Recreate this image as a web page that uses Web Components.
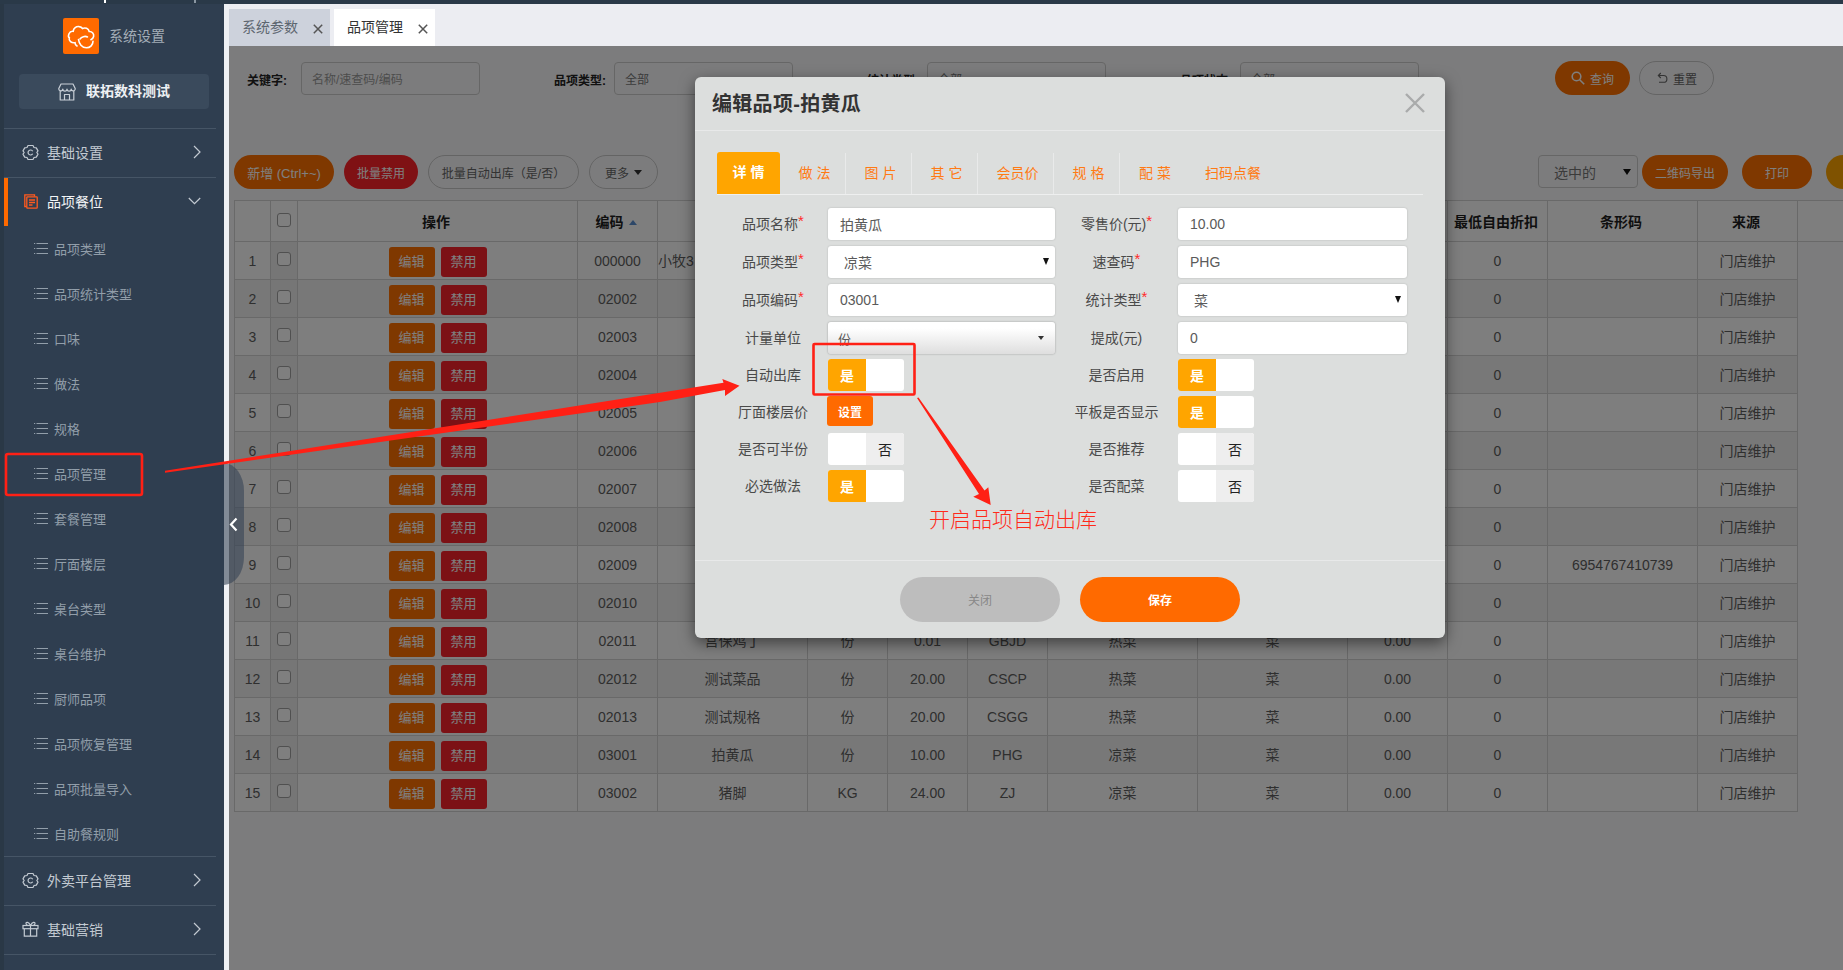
<!DOCTYPE html>
<html lang="zh">
<head>
<meta charset="utf-8">
<title>品项管理</title>
<style>
  html, body { margin: 0; height: 970px; overflow: hidden; background: #eef0f4; }
  body { font-family: "Liberation Sans", "Noto Sans CJK SC", sans-serif; font-size: 14px; position: relative; }
</style>
</head>
<body>
<app-shell></app-shell>
<mark-up></mark-up>

<script>
/* ─────────────────────────────────────────────
   icons
───────────────────────────────────────────── */
const ICONS = {
  gear: `<svg width="17" height="17" viewBox="0 0 17 17" fill="none" stroke="currentColor" stroke-width="1.2" stroke-linejoin="round"><path d="M6 1.5h5l1 2 2.300.4 1.700 3-1.200 1.600 1.200 1.600-1.700 3-2.300.4-1 2H6l-1-2-2.300-.4-1.700-3 1.200-1.600L1 6.900l1.700-3L5 3.500z"/><path d="M10.700 7.200a2.500 2.500 0 1 0 0 2.600"/></svg>`,
  docs: `<svg width="14" height="15" viewBox="0 0 14 15" fill="none" stroke="#ff5a1f" stroke-width="1.300"><path d="M2.500 12.500H.8V.8h9.700v1.700"/><rect x="2.800" y="2.800" width="10.400" height="11.400" rx=".6"/><path d="M5 6h6M5 8.500h6M5 11h3.500"/></svg>`,
  gift: `<svg width="17" height="16" viewBox="0 0 17 16" fill="none" stroke="currentColor" stroke-width="1.200"><rect x="1" y="4.500" width="15" height="3.200"/><path d="M2.300 7.700v7.500h12.400V7.700M8.500 4.500v10.700M8.500 4.500C6 4.500 4 3.800 4 2.400S6.500.3 8.500 4.500zM8.500 4.500c2.500 0 4.500-.7 4.500-2.100S10.500.3 8.500 4.500z"/></svg>`,
  right: `<svg width="8" height="14" viewBox="0 0 8 14" fill="none" stroke="currentColor" stroke-width="1.200"><path d="M1 1l6 6-6 6"/></svg>`,
  down: `<svg width="13" height="8" viewBox="0 0 13 8" fill="none" stroke="currentColor" stroke-width="1.200"><path d="M.8 1l5.700 5.700L12.200 1"/></svg>`,
  list: `<svg width="14" height="13" viewBox="0 0 14 13" fill="none" stroke="currentColor" stroke-width="1"><path d="M2.500 1.500H14M2.500 6.500H14M2.500 11.500H14"/><path d="M0 1.500h1.200M0 6.500h1.200M0 11.500h1.200"/></svg>`,
  store: `<svg width="18" height="18" viewBox="0 0 18 18" fill="none" stroke="#c9d0d8" stroke-width="1.200" stroke-linejoin="round"><path d="M3 1h12l2.200 4.500a2 2 0 0 1-4 .6 2.100 2.100 0 0 1-4.200 0 2.100 2.100 0 0 1-4.200 0 2 2 0 0 1-4-.6z"/><path d="M2.200 8v9h13.600V8M6.500 17v-5.500h5V17"/></svg>`,
  logo: `<svg width="36" height="36" viewBox="0 0 36 36" fill="none" stroke="#fff" stroke-width="1.600" stroke-linecap="round"><path d="M14 28c-1.500-1-2-2.300-2-3.300-3.500.6-6.500-2-5.700-5-.3-.2-1.300-1.600-.3-4 .8-1.800 2.800-2.600 4.200-2.400.3-3 3-5.200 6-4.700 1.500.2 2.700 1 3.300 1.900 2.700-1.300 6-.1 6.700 3 3-.2 5 2.300 4.400 5-.3 1.500-1.400 2.600-2.700 3.200"/><path d="M15.500 21.500c.5 4 3.300 8.300 8 8.300 3.800 0 6.500-3 6.500-6.500"/><path d="M17 21c1.500-2.300 5-3.300 7.500-2"/></svg>`,
  search: `<svg width="14" height="14" viewBox="0 0 14 14" fill="none" stroke="#fff" stroke-width="1.600"><circle cx="5.500" cy="5.500" r="4.300"/><path d="M8.700 8.700l4.500 4.500"/></svg>`,
  reset: `<svg width="12" height="12" viewBox="0 0 12 12" fill="none" stroke="#666" stroke-width="1.100"><path d="M3 3.500h4.500a3.300 3.300 0 0 1 0 6.800H3"/><path d="M4.800 1L2.300 3.500 4.800 6"/></svg>`,
};

/* ─────────────────────────────────────────────
   <app-shell>
───────────────────────────────────────────── */
class AppShell extends HTMLElement {
  connectedCallback() {
    this.attachShadow({ mode: "open" });
    this.shadowRoot.innerHTML = `
      <style>
        :host { display: block; height: 970px; }
        .topbar {
          height: 4px;
          background:
            linear-gradient(#fff, #fff) 104px 0 / 2px 3px no-repeat,
            linear-gradient(#8a96a2, #8a96a2) 194px 0 / 2px 3px no-repeat,
            #2a3948;
        }
        .body { display: flex; height: 966px; }
        main-area { flex: 1; min-width: 0; }
      </style>
      <div class="topbar"></div>
      <div class="body">
        <side-bar></side-bar>
        <main-area></main-area>
      </div>
      <collapse-tab></collapse-tab>
    `;
  }
}
customElements.define("app-shell", AppShell);

/* ─────────────────────────────────────────────
   <side-bar>
───────────────────────────────────────────── */
class SideBar extends HTMLElement {
  connectedCallback() {
    this.attachShadow({ mode: "open" });
    const subs = ["品项类型", "品项统计类型", "口味", "做法", "规格", "品项管理", "套餐管理", "厅面楼层",
      "桌台类型", "桌台维护", "厨师品项", "品项恢复管理", "品项批量导入", "自助餐规则"];
    this.shadowRoot.innerHTML = `
      <style>
        :host {
          display: block; width: 224px; flex: none; box-sizing: border-box;
          background: #2f3e50; border-left: 4px solid #2a3846;
        }
        .brand {
          display: flex; align-items: center; gap: 10px;
          padding: 14px 0 0 59px; color: #a3adb7;
        }
        .brand span:last-child, .store span { padding-bottom: 3px; }
        .logo {
          width: 36px; height: 36px; background: #ff6a00; border-radius: 2px;
          display: flex;
        }
        .store {
          margin: 20px 0 19px 15px; width: 190px; height: 35px;
          background: #3a4a5c; border-radius: 4px;
          display: flex; align-items: center; gap: 10px; padding-left: 39px; box-sizing: border-box;
          color: #eef1f4; font-weight: 700;
        }
        .store svg { flex: none; }
      </style>
      <div class="brand"><span class="logo">${ICONS.logo}</span><span>系统设置</span></div>
      <div class="store">${ICONS.store}<span>联拓数科测试</span></div>
      <nav-group icon="gear" label="基础设置"></nav-group>
      <nav-group icon="docs" label="品项餐位" open></nav-group>
      ${subs.map((s) => `<nav-sub>${s}</nav-sub>`).join("")}
      <nav-group icon="gear" label="外卖平台管理"></nav-group>
      <nav-group icon="gift" label="基础营销" last></nav-group>
    `;
  }
}
customElements.define("side-bar", SideBar);

class NavGroup extends HTMLElement {
  connectedCallback() {
    this.attachShadow({ mode: "open" });
    const open = this.hasAttribute("open");
    this.shadowRoot.innerHTML = `
      <style>
        :host {
          display: flex; align-items: center; height: 49px; box-sizing: border-box;
          margin-right: 8px; padding: 0 15px 2px 18px;
          border-top: 1px solid #465566; color: ${open ? "#f2f4f6" : "#c3cad2"};
          ${open ? "box-shadow: inset 4px 0 0 #ff6a00;" : ""}
          ${this.hasAttribute("last") ? "height: 50px; border-bottom: 1px solid #465566;" : ""}
        }
        .icon { width: 17px; height: 17px; display: flex; align-items: center; justify-content: center; margin-right: 8px; }
        .label { flex: 1; }
        .arrow { display: flex; color: #c3cad2; }
      </style>
      <span class="icon">${ICONS[this.getAttribute("icon")]}</span>
      <span class="label">${this.getAttribute("label")}</span>
      <span class="arrow">${open ? ICONS.down : ICONS.right}</span>
    `;
  }
}
customElements.define("nav-group", NavGroup);

class NavSub extends HTMLElement {
  connectedCallback() {
    this.attachShadow({ mode: "open" });
    this.shadowRoot.innerHTML = `
      <style>
        :host {
          display: flex; align-items: center; gap: 6px; height: 45px;
          padding-left: 30px; font-size: 13px; color: #929eaa;
        }
        svg { flex: none; }
      </style>
      ${ICONS.list}<slot></slot>
    `;
  }
}
customElements.define("nav-sub", NavSub);

class CollapseTab extends HTMLElement {
  connectedCallback() {
    this.attachShadow({ mode: "open" });
    this.shadowRoot.innerHTML = `
      <style>
        :host {
          position: absolute; left: 224px; top: 463px; width: 20px; height: 122px; z-index: 5;
          background: rgba(52, 66, 84, .58);
          border-radius: 0 20px 20px 0 / 0 28px 28px 0;
          display: flex; align-items: center;
        }
        svg { margin-left: 5px; }
      </style>
      <svg width="9" height="15" viewBox="0 0 9 15" fill="none" stroke="#fff" stroke-width="2.200"><path d="M7.500 1.500L2 7.500l5.500 6"/></svg>
    `;
  }
}
customElements.define("collapse-tab", CollapseTab);

/* ─────────────────────────────────────────────
   <main-area>
───────────────────────────────────────────── */
class MainArea extends HTMLElement {
  connectedCallback() {
    this.attachShadow({ mode: "open" });
    this.shadowRoot.innerHTML = `
      <style>
        :host { display: flex; flex-direction: column; height: 966px; padding-left: 5px; background: #eef0f4; }
        .tabs { display: flex; gap: 4px; height: 42px; padding-top: 5px; box-sizing: border-box; background: #ecedf2; }
        .panel { flex: 1; position: relative; overflow: hidden; background: #f9f9fb; }
        .dim { position: absolute; inset: 0; background: rgba(0, 0, 0, .5); }
        edit-dialog { position: absolute; left: 466px; top: 31px; }
      </style>
      <div class="tabs">
        <page-tab>系统参数</page-tab>
        <page-tab active>品项管理</page-tab>
      </div>
      <div class="panel">
        <filter-bar></filter-bar>
        <action-bar></action-bar>
        <item-table></item-table>
        <div class="dim"></div>
        <edit-dialog></edit-dialog>
      </div>
    `;
  }
}
customElements.define("main-area", MainArea);

class PageTab extends HTMLElement {
  connectedCallback() {
    this.attachShadow({ mode: "open" });
    const active = this.hasAttribute("active");
    this.shadowRoot.innerHTML = `
      <style>
        :host {
          display: flex; align-items: center; width: 101px; height: 37px; box-sizing: border-box;
          padding: 0 7px 3px 13px; justify-content: space-between;
          background: ${active ? "#fff" : "#cdd2dc"}; color: ${active ? "#333" : "#5d6670"};
        }
        svg { margin-top: 5px; }
      </style>
      <slot></slot>
      <svg width="10" height="10" viewBox="0 0 10 10" stroke="#555" stroke-width="1.500"><path d="M.8.800l8.400 8.400M9.200.800L.8 9.200"/></svg>
    `;
  }
}
customElements.define("page-tab", PageTab);

/* ─────────────────────────────────────────────
   <pill-btn>
───────────────────────────────────────────── */
class PillBtn extends HTMLElement {
  connectedCallback() {
    this.attachShadow({ mode: "open" });
    const colors = { orange: "#ff7000", red: "#ff2228", yellow: "#ffa500" };
    const bg = colors[this.getAttribute("kind")];
    this.shadowRoot.innerHTML = `
      <style>
        :host {
          display: inline-flex; align-items: center; justify-content: center; gap: 5px; flex: none;
          width: ${this.getAttribute("w")}px; height: 34px; box-sizing: border-box;
          border-radius: 17px; font-size: ${this.getAttribute("fs") || 12}px; white-space: nowrap;
          ${bg ? `background: ${bg}; color: #fff;` : "border: 1px solid #c8c8c8; color: #666;"}
        }
      </style>
      <slot></slot>
    `;
  }
}
customElements.define("pill-btn", PillBtn);

/* ─────────────────────────────────────────────
   <filter-bar>
───────────────────────────────────────────── */
class FilterBar extends HTMLElement {
  connectedCallback() {
    this.attachShadow({ mode: "open" });
    const field = (label, w, text, select) => `
      <div class="field">
        <span class="label" style="width:${w}px">${label}</span>
        <span class="ctl ${select ? "select" : "ph"}">${text}</span>
      </div>`;
    this.shadowRoot.innerHTML = `
      <style>
        :host { display: flex; gap: 74px; padding: 15px 0 0 18px; height: 34px; }
        .field { display: flex; align-items: center; }
        .label { font-size: 12px; font-weight: 700; color: #222; padding-top: 3px; }
        .ctl {
          position: relative; width: 179px; height: 33px; box-sizing: border-box;
          border: 1px solid #ccc; border-radius: 4px; padding: 0 10px;
          display: flex; align-items: center; font-size: 12px; color: #777;
        }
        .ph { color: #999; }
        .select::after {
          content: ""; position: absolute; right: 7px; top: 14px;
          border: 4px solid transparent; border-top: 5px solid #222; border-bottom: 0;
        }
        .btns { display: flex; gap: 9px; margin-left: 62px; }
        svg { flex: none; }
      </style>
      ${field("关键字:", 54, "名称/速查码/编码")}
      ${field("品项类型:", 60, "全部", true)}
      ${field("统计类型:", 60, "全部", true)}
      ${field("品项状态:", 60, "全部", true)}
      <div class="btns">
        <pill-btn kind="orange" w="75">${ICONS.search}查询</pill-btn>
        <pill-btn w="75">${ICONS.reset}重置</pill-btn>
      </div>
    `;
  }
}
customElements.define("filter-bar", FilterBar);

/* ─────────────────────────────────────────────
   <action-bar>
───────────────────────────────────────────── */
class ActionBar extends HTMLElement {
  connectedCallback() {
    this.attachShadow({ mode: "open" });
    this.shadowRoot.innerHTML = `
      <style>
        :host { display: flex; align-items: center; gap: 10px; margin-top: 60px; padding-left: 5px; height: 34px; }
        .caret { display: inline-block; border: 4px solid transparent; border-top: 5px solid #333; border-bottom: 0; }
        .right { display: flex; gap: 14px; margin-left: 870px; }
        .pick {
          position: relative; width: 100px; height: 33px; box-sizing: border-box; margin-right: -10px;
          border: 1px solid #ccc; border-radius: 4px; padding-left: 15px;
          display: flex; align-items: center; font-size: 14px; color: #777;
        }
        .pick::after {
          content: ""; position: absolute; right: 6px; top: 13px;
          border: 4px solid transparent; border-top: 6px solid #111; border-bottom: 0;
        }
      </style>
      <pill-btn kind="orange" w="100" fs="13">新增 (Ctrl+~)</pill-btn>
      <pill-btn kind="red" w="74">批量禁用</pill-btn>
      <pill-btn w="151">批量自动出库（是/否）</pill-btn>
      <pill-btn w="69">更多 <span class="caret"></span></pill-btn>
      <div class="right">
        <div class="pick">选中的</div>
        <pill-btn kind="orange" w="86">二维码导出</pill-btn>
        <pill-btn kind="orange" w="70">打印</pill-btn>
        <pill-btn kind="yellow" w="70"></pill-btn>
      </div>
    `;
  }
}
customElements.define("action-bar", ActionBar);

/* ─────────────────────────────────────────────
   <item-table>
───────────────────────────────────────────── */
class ItemTable extends HTMLElement {
  connectedCallback() {
    this.attachShadow({ mode: "open" });
    const widths = [36, 27, 280, 80, 150, 80, 80, 80, 150, 150, 100, 100, 150, 100, 46];
    // rows 2-10 are covered by the dialog, only their code shows
    const rows = [
      ["000000", "小牧3", "", "", "", "", "", ""],
      ["02002"], ["02003"], ["02004"], ["02005"], ["02006"], ["02007"], ["02008"], ["02009"], ["02010"],
      ["02011", "宫保鸡丁", "份", "0.01", "GBJD", "热菜", "菜", "0.00"],
      ["02012", "测试菜品", "份", "20.00", "CSCP", "热菜", "菜", "0.00"],
      ["02013", "测试规格", "份", "20.00", "CSGG", "热菜", "菜", "0.00"],
      ["03001", "拍黄瓜", "份", "10.00", "PHG", "凉菜", "菜", "0.00"],
      ["03002", "猪脚", "KG", "24.00", "ZJ", "凉菜", "菜", "0.00"],
    ];
    const body = rows.map((r, i) => {
      const cells = [];
      for (let c = 0; c < 8; c++) {
        cells.push(`<td class="${i === 0 && c === 1 ? "left" : ""}">${r[c] || ""}</td>`);
      }
      return `
        <tr class="${i % 2 ? "even" : ""}">
          <td>${i + 1}</td>
          <td class="chk"><span class="box"></span></td>
          <td><div class="ops"><span class="btn edit">编辑</span><span class="btn ban">禁用</span></div></td>
          ${cells.join("")}
          <td>0</td>
          <td>${i === 8 ? "6954767410739" : ""}</td>
          <td>门店维护</td>
        </tr>`;
    }).join("");
    this.shadowRoot.innerHTML = `
      <style>
        :host { display: block; margin-top: 11px; padding-left: 5px; }
        table { border-collapse: collapse; table-layout: fixed; width: 1609px; font-size: 14px; color: #5e5e5e; }
        th { height: 41px; box-sizing: border-box; border: 1px solid #d2d2d2; color: #1e1e1e; font-size: 14px; padding: 0 3px 0 0; background: #fcfcfc; }
        td {
          height: 38px; box-sizing: border-box; border: 1px solid #d2d2d2; text-align: center; padding: 0;
          line-height: 18px; background: #fdfdfd; white-space: nowrap; overflow: hidden;
        }
        tr.even td { background: #f0f0f0; }
        td.chk, tr.even td.chk { background: #ececec; }
        th.chk { padding: 0; }
        th.last { border-right: 0; }
        .left { text-align: left; }
        .box {
          display: block; width: 14px; height: 14px; margin: 0 auto 3px; box-sizing: border-box;
          border: 1px solid #a0a0a0; border-radius: 3px; background: #fff;
        }
        .ops { display: flex; justify-content: center; gap: 6px; padding-top: 2px; }
        .btn {
          width: 46px; height: 30px; border-radius: 3px; color: #fff; font-size: 13px;
          display: flex; align-items: center; justify-content: center;
        }
        .edit { background: #ff7000; }
        .ban { background: #f8222a; }
        .sort {
          display: inline-block; margin-left: 5px; vertical-align: 2px;
          border: 4px solid transparent; border-bottom: 5px solid #5b8fd0; border-top: 0;
        }
      </style>
      <table>
        <colgroup>${widths.map((w) => `<col style="width:${w}px">`).join("")}</colgroup>
        <thead>
          <tr>
            <th></th>
            <th class="chk"><span class="box"></span></th>
            <th>操作</th>
            <th>编码<span class="sort"></span></th>
            <th></th><th></th><th></th><th></th><th></th><th></th><th></th>
            <th>最低自由折扣</th>
            <th>条形码</th>
            <th>来源</th>
            <th class="last"></th>
          </tr>
        </thead>
        <tbody>${body}</tbody>
      </table>
    `;
  }
}
customElements.define("item-table", ItemTable);

/* ─────────────────────────────────────────────
   <edit-dialog>
───────────────────────────────────────────── */
class EditDialog extends HTMLElement {
  connectedCallback() {
    this.attachShadow({ mode: "open" });
    const tabs = [["做 法", 66], ["图 片", 66], ["其 它", 66], ["会员价", 76], ["规 格", 66], ["配 菜", 66, true], ["扫码点餐", 90, true]];
    this.shadowRoot.innerHTML = `
      <style>
        :host {
          display: block; width: 750px; height: 561px; box-sizing: border-box;
          background: #dcdedd; border-radius: 6px; box-shadow: 0 5px 15px rgba(0, 0, 0, .5);
          color: #444;
        }
        .head {
          display: flex; align-items: center; justify-content: space-between;
          height: 54px; padding: 0 20px 2px 17px; box-sizing: border-box; border-bottom: 1px solid #e8e9e9;
          font-size: 20px; font-weight: 700; color: #333; letter-spacing: .3px;
        }
        .tabs {
          display: flex; margin: 21px 22px 13px; height: 43px; box-sizing: border-box;
          border-bottom: 1px solid #eeefef;
        }
        .tab {
          display: flex; align-items: center; justify-content: center; box-sizing: border-box;
          color: #ff7a14; border-right: 1px solid #e9eaea; margin-top: 1px;
          padding: 0 0 4px 4px;
        }
        .tab.on { width: 63px; margin-top: 0; padding-left: 0; background: #ffa500; color: #fff; font-weight: 700; border: 0; border-radius: 3px 3px 0 0; }
        .tab.plain { border-right: 0; }
        .grid {
          display: grid; grid-template-columns: 337px 352px; grid-auto-rows: 32px; row-gap: 6px;
          margin-left: 23px;
        }
        .grid.sw { row-gap: 5px; margin-top: 5px; }
        .foot {
          display: flex; justify-content: center; gap: 20px; margin-top: 58px; padding-top: 16px;
          border-top: 1px solid #e8e9e9;
        }
        .foot span {
          width: 160px; height: 45px; border-radius: 23px; font-size: 12px;
          display: flex; align-items: center; justify-content: center;
        }
        .close { background: #bdbdbd; color: #888; }
        .save { background: #ff6a00; color: #fff; font-weight: 700; }
        .set {
          width: 46px; height: 30px; margin-left: -1px; border-radius: 3px; background: #ff6a00; color: #fff;
          font-size: 12px; font-weight: 700; display: flex; align-items: center; justify-content: center;
        }
      </style>
      <div class="head">
        <span>编辑品项-拍黄瓜</span>
        <svg width="20" height="20" viewBox="0 0 20 20" stroke="#a9abab" stroke-width="2.400"><path d="M1 1l18 18M19 1L1 19"/></svg>
      </div>
      <div class="tabs">
        <div class="tab on">详 情</div>
        ${tabs.map(([t, w, plain]) => `<div class="tab ${plain ? "plain" : ""}" style="width:${w}px">${t}</div>`).join("")}
      </div>
      <div class="grid">
        <form-field label="品项名称" required w="110"><text-box>拍黄瓜</text-box></form-field>
        <form-field label="零售价(元)" required w="123"><text-box>10.00</text-box></form-field>
        <form-field label="品项类型" required w="110"><text-box select>凉菜</text-box></form-field>
        <form-field label="速查码" required w="123"><text-box>PHG</text-box></form-field>
        <form-field label="品项编码" required w="110"><text-box>03001</text-box></form-field>
        <form-field label="统计类型" required w="123"><text-box select>菜</text-box></form-field>
        <form-field label="计量单位" w="110"><text-box menu>份</text-box></form-field>
        <form-field label="提成(元)" w="123"><text-box>0</text-box></form-field>
      </div>
      <div class="grid sw">
        <form-field label="自动出库" w="110"><toggle-switch on></toggle-switch></form-field>
        <form-field label="是否启用" w="123"><toggle-switch on></toggle-switch></form-field>
        <form-field label="厅面楼层价" w="110"><span class="set">设置</span></form-field>
        <form-field label="平板是否显示" w="123"><toggle-switch on></toggle-switch></form-field>
        <form-field label="是否可半份" w="110"><toggle-switch></toggle-switch></form-field>
        <form-field label="是否推荐" w="123"><toggle-switch></toggle-switch></form-field>
        <form-field label="必选做法" w="110"><toggle-switch on></toggle-switch></form-field>
        <form-field label="是否配菜" w="123"><toggle-switch></toggle-switch></form-field>
      </div>
      <div class="foot"><span class="close">关闭</span><span class="save">保存</span></div>
    `;
  }
}
customElements.define("edit-dialog", EditDialog);

class FormField extends HTMLElement {
  connectedCallback() {
    this.attachShadow({ mode: "open" });
    this.shadowRoot.innerHTML = `
      <style>
        :host { display: flex; align-items: flex-start; }
        .label {
          flex: none; width: ${this.getAttribute("w")}px; height: 32px; box-sizing: border-box; padding-bottom: 3px;
          display: flex; align-items: center; justify-content: center; color: #4a4a4a; white-space: nowrap;
        }
        .star { color: #ff2a2a; font-size: 15px; align-self: flex-start; margin-top: 4px; }
        .ctl { display: flex; flex: 1; min-width: 0; }
      </style>
      <span class="label">${this.getAttribute("label")}${this.hasAttribute("required") ? '<span class="star">*</span>' : ""}</span>
      <span class="ctl"><slot></slot></span>
    `;
  }
}
customElements.define("form-field", FormField);

class TextBox extends HTMLElement {
  connectedCallback() {
    this.attachShadow({ mode: "open" });
    const select = this.hasAttribute("select");
    const menu = this.hasAttribute("menu");
    this.shadowRoot.innerHTML = `
      <style>
        :host {
          position: relative; flex: 1; height: 32px; box-sizing: border-box;
          display: flex; align-items: center; border-radius: 3px;
          padding-left: ${select ? 16 : menu ? 10 : 12}px;
          background: ${menu ? "linear-gradient(#fff 20%, #dedede)" : "#fff"};
          box-shadow: 0 0 2px rgba(0, 0, 0, ${menu ? ".35" : ".2"});
          color: #5a5a5a; font-size: ${menu ? 13 : 14}px;
        }
        .arrow {
          position: absolute; right: ${menu ? 11 : 6}px; top: ${menu ? 14 : 12}px;
          border: ${menu ? 3.500 : 3}px solid transparent;
          border-top: ${menu ? 4 : 7}px solid ${menu ? "#333" : "#111"}; border-bottom: 0;
        }
      </style>
      <slot></slot>
      ${select || menu ? '<span class="arrow"></span>' : ""}
    `;
  }
}
customElements.define("text-box", TextBox);

class ToggleSwitch extends HTMLElement {
  connectedCallback() {
    this.attachShadow({ mode: "open" });
    const on = this.hasAttribute("on");
    this.shadowRoot.innerHTML = `
      <style>
        :host { display: flex; width: 76px; height: 32px; border-radius: 3px; overflow: hidden; background: #fff; }
        span { width: 38px; display: flex; align-items: center; justify-content: center; }
        .yes { background: #ffa500; color: #fff; font-weight: 700; }
        .no { background: #eee; color: #222; margin-left: auto; }
      </style>
      ${on ? '<span class="yes">是</span>' : '<span class="no">否</span>'}
    `;
  }
}
customElements.define("toggle-switch", ToggleSwitch);

/* ─────────────────────────────────────────────
   <mark-up>  red notes drawn over the screenshot
───────────────────────────────────────────── */
class MarkUp extends HTMLElement {
  connectedCallback() {
    this.attachShadow({ mode: "open" });
    this.shadowRoot.innerHTML = `
      <style>
        :host { position: absolute; inset: 0; z-index: 10; pointer-events: none; }
        svg { position: absolute; inset: 0; }
        .note { position: absolute; left: 929px; top: 502px; font-size: 21px; line-height: 32px; color: #ff2a1a; font-family: "Noto Sans CJK SC", sans-serif; font-weight: 300; white-space: nowrap; }
      </style>
      <svg width="1843" height="970" fill="none" stroke="#ff2015">
        <rect x="6" y="454" width="136" height="41" rx="2" stroke-width="2.600"/>
        <rect x="813.500" y="344" width="101" height="50.500" rx="1" stroke-width="2.600"/>
        <path fill="#ff2015" stroke="none" d="M165 470.700 L723.500 382.800 L722.300 379 L739.500 385.700 L725 396 L725 390 L660 402 L165 472.700 Z"/>
        <path fill="#ff2015" stroke="none" d="M917 398 L918.500 397.500 L984.500 490.500 L988.300 487.300 L990.700 505 L973.300 496.700 L979 494 Z"/>
      </svg>
      <span class="note">开启品项自动出库</span>
    `;
  }
}
customElements.define("mark-up", MarkUp);
</script>
</body>
</html>
